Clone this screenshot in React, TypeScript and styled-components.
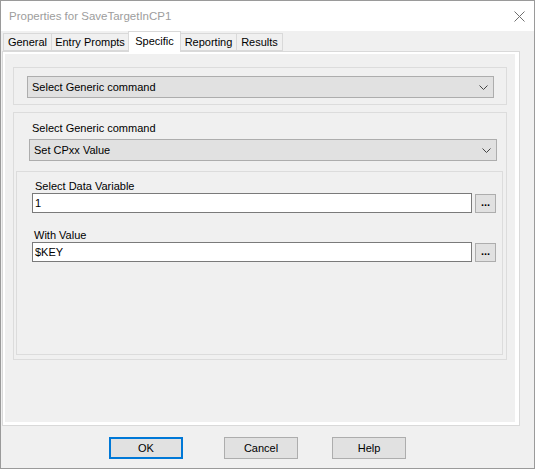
import styled, { createGlobalStyle } from 'styled-components';

const GlobalStyle = createGlobalStyle`
  html, body {
    margin: 0;
    padding: 0;
    background: #f0f0f0;
  }
  * {
    box-sizing: border-box;
  }
`;

const Window = styled.div`
  width: 535px;
  height: 469px;
  border: 1px solid #9a9a9a;
  background: #f0f0f0;
  font-family: "Liberation Sans", Arial, sans-serif;
  font-size: 11px;
  color: #000;
  display: flex;
  flex-direction: column;
`;

const TitleBar = styled.div`
  height: 30px;
  background: #fff;
  display: flex;
  align-items: center;
  justify-content: space-between;
  padding: 0 9px 0 8px;
`;

const Title = styled.span`
  font-size: 11.5px;
  color: #9d9d9d;
`;

const TabRow = styled.div`
  height: 20px;
  display: flex;
  align-items: flex-end;
  padding-left: 2px;
`;

const Tab = styled.div<{ $w: number; $active?: boolean }>`
  width: ${(p) => p.$w}px;
  height: ${(p) => (p.$active ? 21 : 18)}px;
  margin-left: -1px;
  margin-bottom: ${(p) => (p.$active ? -1 : 0)}px;
  border: 1px solid #d9d9d9;
  border-bottom: ${(p) => (p.$active ? 'none' : '1px solid #d9d9d9')};
  background: ${(p) => (p.$active ? '#fff' : '#f0f0f0')};
  display: flex;
  align-items: center;
  justify-content: center;
  padding-bottom: ${(p) => (p.$active ? 2 : 0)}px;
  position: relative;
  z-index: ${(p) => (p.$active ? 1 : 0)};
  &:first-child {
    margin-left: 0;
  }
`;

const Panel = styled.div`
  margin-left: 1px;
  width: 518px;
  height: 375px;
  border: 1px solid #d9d9d9;
  background: #fff;
  padding: 2px 4px 3px 2px;
`;

const Page = styled.div`
  height: 100%;
  background: #f0f0f0;
  padding: 13px 0 0 8px;
  display: flex;
  flex-direction: column;
  gap: 7px;
`;

const Group = styled.div<{ $h?: number }>`
  width: 494px;
  border: 1px solid #dcdcdc;
  ${(p) => (p.$h ? `height: ${p.$h}px;` : '')}
`;

const TopGroup = styled(Group)`
  padding: 8px 0 6px 13px;
`;

const CommandGroup = styled(Group)`
  padding: 9px 3px 3px 2px;
  display: flex;
  flex-direction: column;
`;

const Label = styled.div<{ $indent?: number; $top?: number }>`
  height: 13px;
  line-height: 13px;
  padding-left: ${(p) => p.$indent ?? 0}px;
  margin-top: ${(p) => p.$top ?? 0}px;
  white-space: nowrap;
`;

const Select = styled.div<{ $w: number; $left?: number; $top?: number }>`
  width: ${(p) => p.$w}px;
  height: 22px;
  margin-left: ${(p) => p.$left ?? 0}px;
  margin-top: ${(p) => p.$top ?? 0}px;
  background: #e1e1e1;
  border: 1px solid #adadad;
  display: flex;
  align-items: center;
  justify-content: space-between;
  padding: 0 5px 0 4px;
`;

const InnerGroup = styled.div`
  height: 184px;
  margin-top: 10px;
  border: 1px solid #dcdcdc;
  padding: 8px 6px 0 15px;
  display: flex;
  flex-direction: column;
`;

const FieldRow = styled.div`
  display: flex;
  align-items: flex-start;
  gap: 3px;
`;

const TextBox = styled.div`
  width: 440px;
  height: 20px;
  background: #fff;
  border: 1px solid #7a7a7a;
  display: flex;
  align-items: center;
  padding-left: 2px;
`;

const Browse = styled.div`
  width: 21px;
  height: 19px;
  margin-top: 1px;
  background: #e1e1e1;
  border: 1px solid #adadad;
  display: flex;
  align-items: center;
  justify-content: center;
  font-weight: bold;
  font-size: 11px;
  line-height: 1;
  padding-bottom: 3px;
`;

const Footer = styled.div`
  display: flex;
  padding: 11px 0 0 108px;
`;

const Button = styled.div<{ $left?: number; $default?: boolean }>`
  width: 74px;
  height: 22px;
  margin-left: ${(p) => p.$left ?? 0}px;
  background: #e1e1e1;
  border: ${(p) => (p.$default ? '2px solid #0078d7' : '1px solid #adadad')};
  display: flex;
  align-items: center;
  justify-content: center;
`;

const Chevron = () => (
  <svg width="9" height="5" viewBox="0 0 9 5">
    <polyline points="0.5,0.5 4.5,4.5 8.5,0.5" fill="none" stroke="#444" strokeWidth="1" />
  </svg>
);

const CloseIcon = () => (
  <svg width="11" height="11" viewBox="0 0 11 11">
    <path d="M0.5 0.5 L10.5 10.5 M10.5 0.5 L0.5 10.5" stroke="#6f6f6f" strokeWidth="1" />
  </svg>
);

const tabs = [
  { name: 'General', w: 49 },
  { name: 'Entry Prompts', w: 78 },
  { name: 'Specific', w: 53, active: true },
  { name: 'Reporting', w: 57 },
  { name: 'Results', w: 47 },
];

export default function App() {
  return (
    <>
      <GlobalStyle />
      <Window>
        <TitleBar>
          <Title>Properties for SaveTargetInCP1</Title>
          <CloseIcon />
        </TitleBar>
        <TabRow>
          {tabs.map((t) => (
            <Tab key={t.name} $w={t.w} $active={t.active}>
              {t.name}
            </Tab>
          ))}
        </TabRow>
        <Panel>
          <Page>
            <TopGroup>
              <Select $w={467}>
                <span>Select Generic command</span>
                <Chevron />
              </Select>
            </TopGroup>
            <CommandGroup $h={248}>
              <Label $indent={16}>Select Generic command</Label>
              <Select $w={468} $left={13} $top={4}>
                <span>Set CPxx Value</span>
                <Chevron />
              </Select>
              <InnerGroup>
                <Label $indent={3}>Select Data Variable</Label>
                <FieldRow>
                  <TextBox>1</TextBox>
                  <Browse>...</Browse>
                </FieldRow>
                <Label $indent={2} $top={16}>With Value</Label>
                <FieldRow>
                  <TextBox>$KEY</TextBox>
                  <Browse>...</Browse>
                </FieldRow>
              </InnerGroup>
            </CommandGroup>
          </Page>
        </Panel>
        <Footer>
          <Button $default>OK</Button>
          <Button $left={41}>Cancel</Button>
          <Button $left={34}>Help</Button>
        </Footer>
      </Window>
    </>
  );
}
